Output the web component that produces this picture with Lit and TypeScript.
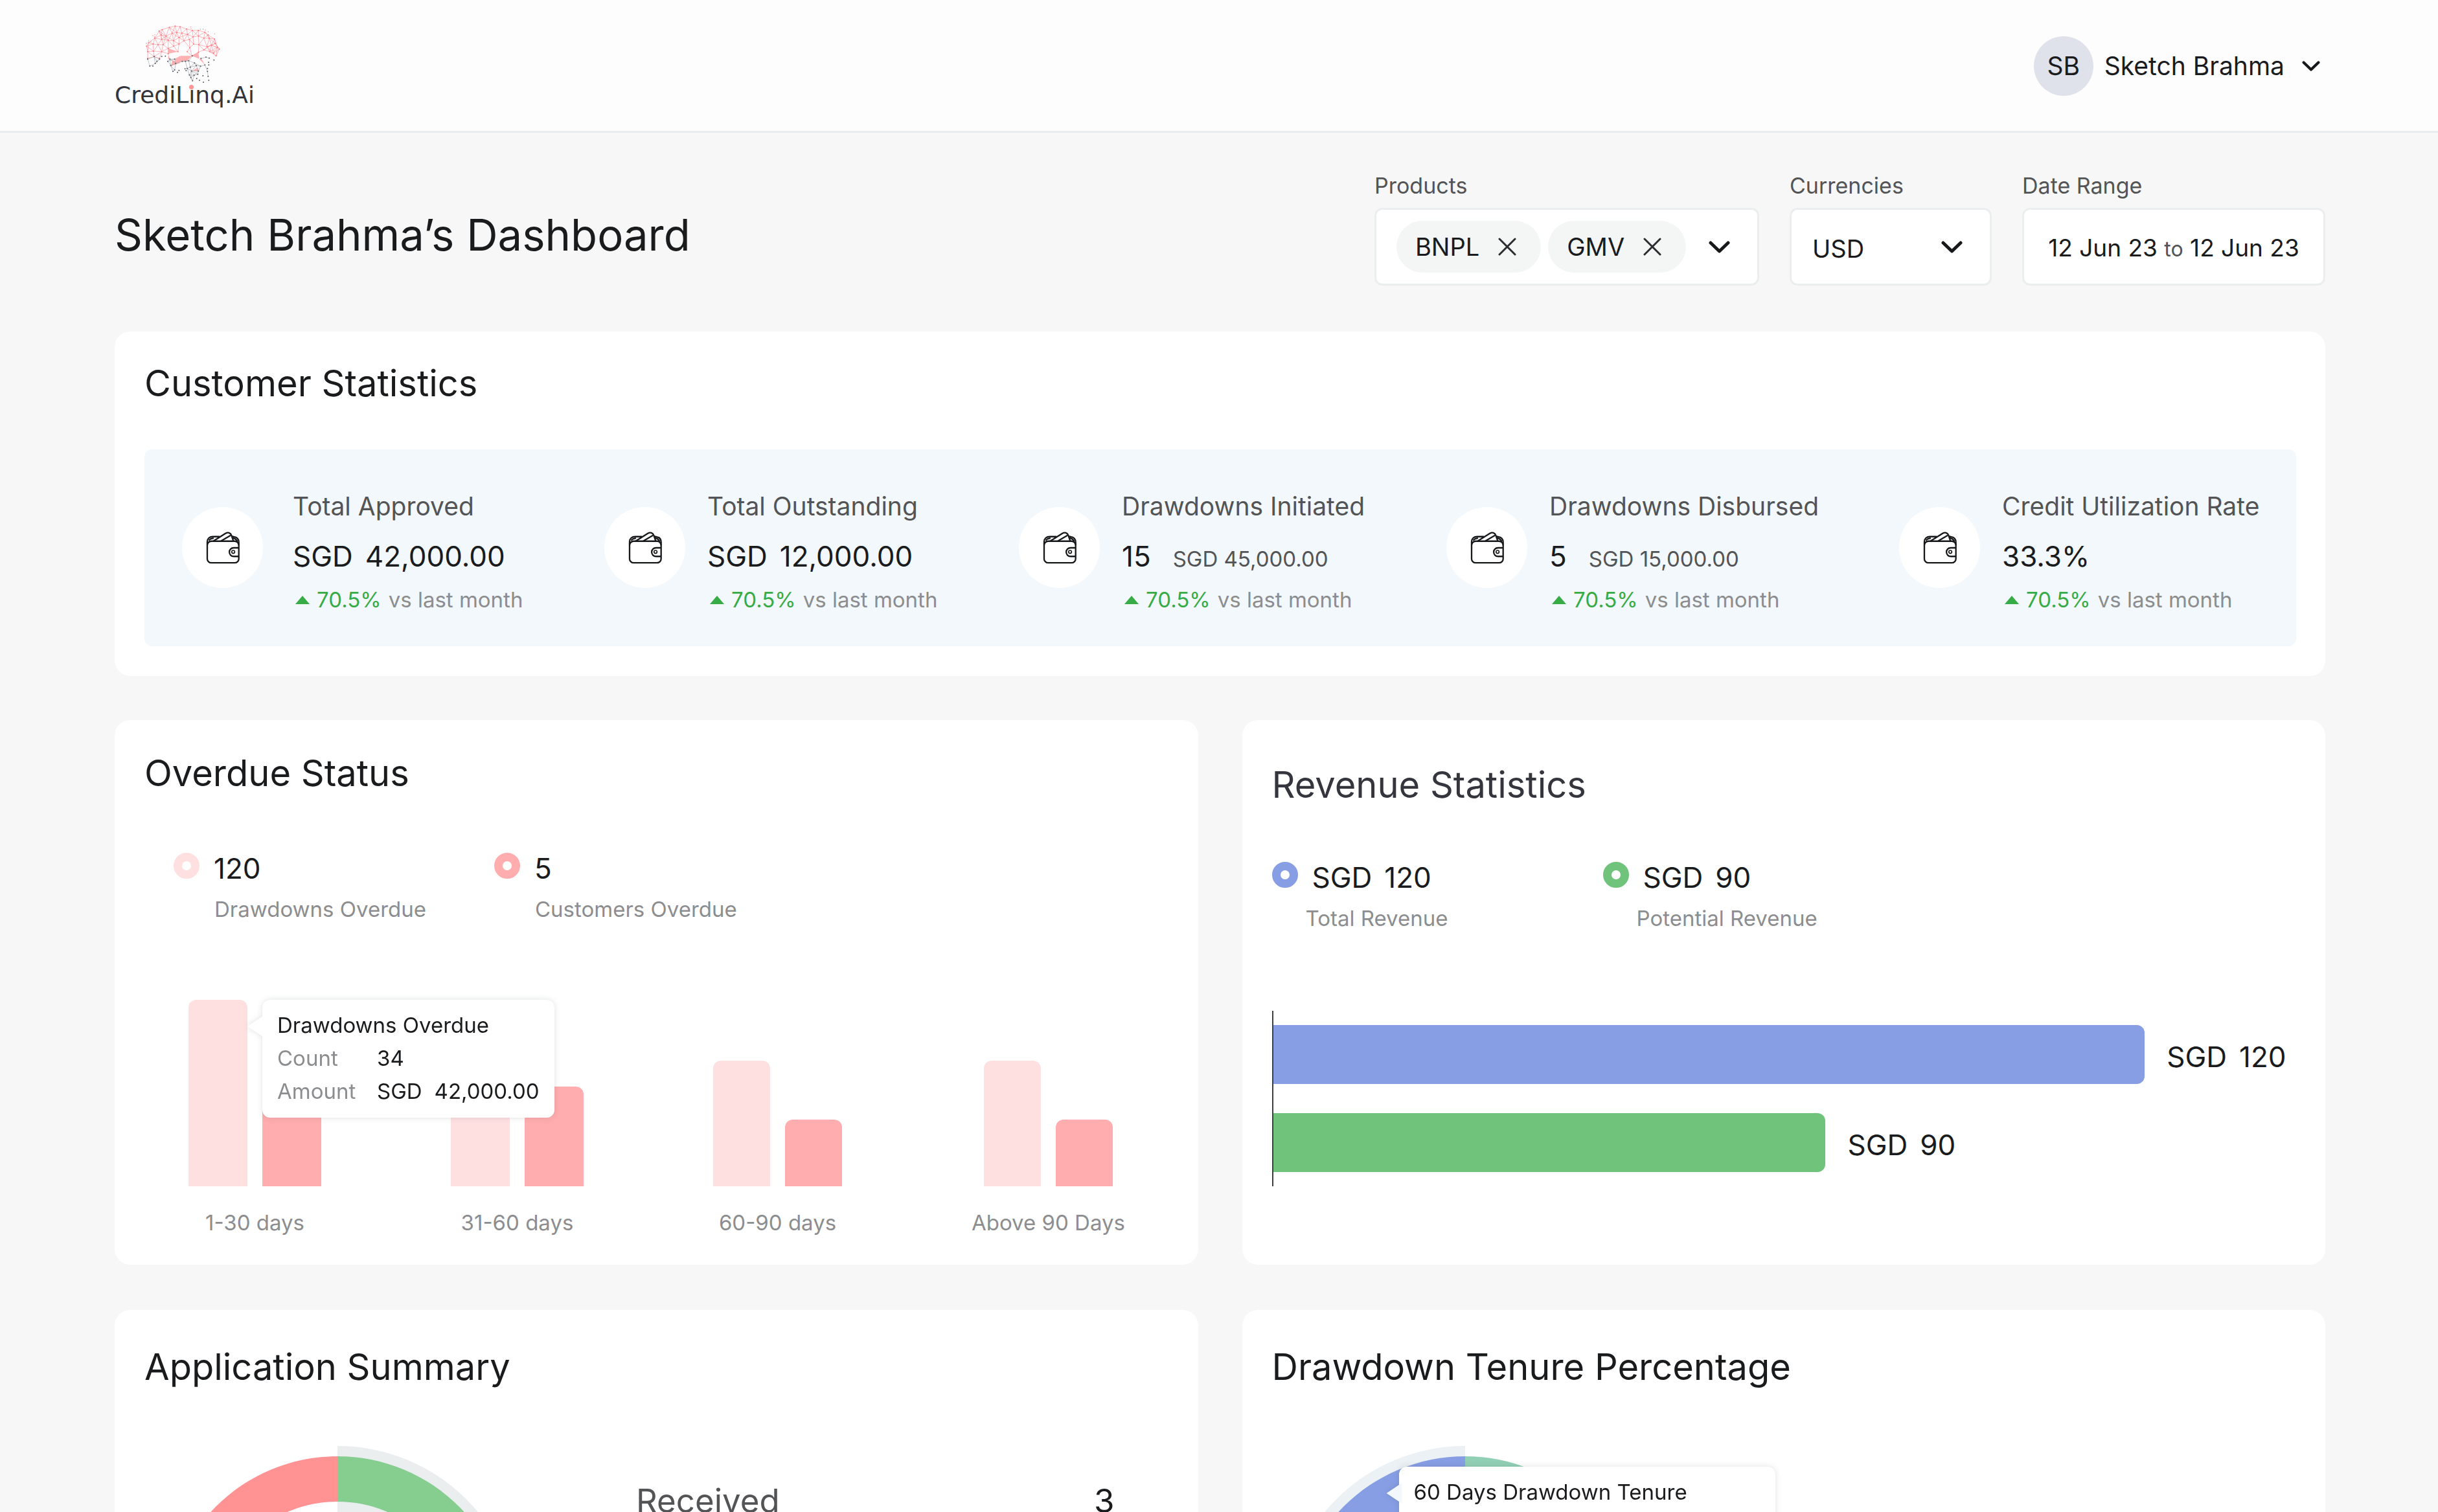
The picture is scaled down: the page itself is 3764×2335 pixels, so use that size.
import { LitElement, html, svg, css } from "lit";
import { customElement, state } from "lit/decorators.js";

type Point = [number, number];

/* ---------- Logo ---------- */

const CANOPY: Point[] = [
  [200, 155], [210, 138], [230, 145], [238, 118], [258, 85], [272, 78], [268, 103],
  [305, 68], [332, 62], [355, 65], [318, 95], [290, 108], [270, 123], [253, 148],
  [232, 178], [205, 180], [300, 128], [325, 130], [350, 115], [340, 92], [363, 95],
  [390, 100], [385, 75], [412, 82], [440, 82], [470, 90], [485, 103], [415, 112],
  [440, 108], [465, 118], [490, 118], [515, 122], [518, 142], [500, 150], [480, 158],
  [465, 172], [442, 148], [418, 145], [400, 162], [398, 124], [373, 130], [350, 145],
  [325, 155], [300, 165], [276, 148], [270, 180], [300, 190], [345, 180], [388, 180],
  [410, 200], [440, 183], [510, 188], [537, 168], [522, 200], [528, 160], [492, 180],
  [205, 212], [235, 203], [260, 212],
];

const ROOTS: Point[] = [
  [205, 215], [215, 247], [235, 203], [240, 235], [260, 215], [248, 225],
  [298, 225], [308, 215], [330, 215], [312, 245], [335, 235], [365, 225],
  [322, 272], [330, 265], [380, 225], [388, 258], [402, 252], [422, 233],
  [395, 222], [412, 200], [452, 212], [470, 242], [490, 210], [430, 245],
  [450, 248], [408, 270], [440, 270], [420, 290], [437, 285], [398, 288],
  [405, 300], [413, 315], [482, 272], [485, 295], [475, 206],
];

const SPECKS: Point[] = [
  [343, 276], [350, 267], [378, 260], [383, 268], [432, 305], [445, 313], [461, 292],
  [482, 258], [488, 313], [463, 322], [487, 230], [488, 242], [229, 247], [270, 203],
  [512, 219], [287, 201],
];

const SPARKS: Point[] = [
  [229, 106], [238, 102], [236, 112], [404, 66], [406, 74], [449, 76], [462, 76],
  [473, 80], [485, 88], [515, 98], [210, 130], [199, 142], [512, 176], [220, 134],
];

const FILLS = [
  "300,165 345,180 300,190", "300,190 300,215 308,215", "355,200 410,200 388,223 365,225",
  "440,183 410,200 443,213", "320,220 358,232 312,247", "443,213 470,242 455,214",
  "437,254 410,270 440,270", "330,215 355,200 365,225 340,235",
];

function mesh(points: Point[], reach: number) {
  const lines = [];
  for (let i = 0; i < points.length; i++) {
    for (let j = i + 1; j < points.length; j++) {
      const [a, b] = points[i];
      const [c, d] = points[j];
      if (Math.hypot(a - c, b - d) < reach) {
        lines.push(svg`<line x1=${a} y1=${b} x2=${c} y2=${d}></line>`);
      }
    }
  }
  return lines;
}

const dots = (points: Point[], r: number) =>
  points.map(([x, y]) => svg`<circle cx=${x} cy=${y} r=${r}></circle>`);

@customElement("brand-logo")
class BrandLogo extends LitElement {
  static styles = css`
    :host { display: block; color: #34353b; }
    .tree { display: block; width: 118px; height: 92px; margin-left: 46px; }
    .name { font: 36px/34px "DejaVu Sans", Verdana, sans-serif; white-space: nowrap; }
    .accent { position: relative; }
    .accent::before {
      content: ""; position: absolute; left: 50%; top: 5px;
      width: 7px; height: 7px; margin-left: -4px; border-radius: 50%; background: #ff9596;
    }
  `;
  render() {
    return html`
      <svg class="tree" viewBox="190 55 354 276" aria-hidden="true">
        <g fill="#ffb0b2">${FILLS.map((p) => svg`<polygon points=${p}></polygon>`)}</g>
        <g stroke="#ff9099" stroke-width="2">${mesh(CANOPY, 43)}</g>
        <g stroke="#a2a8ae" stroke-width="2">${mesh(ROOTS, 34)}</g>
        <g fill="#ff787e">${dots(CANOPY, 3)}${dots(SPARKS, 2)}</g>
        <g fill="#55585e">${dots(ROOTS, 3)}${dots(SPECKS, 3)}</g>
      </svg>
      <div class="name">CrediL<span class="accent">i</span>nq.Ai</div>
    `;
  }
}

/* ---------- Shared icons ---------- */

const chevron = (w: number, h: number) => html`
  <svg width=${w} height=${h} viewBox="0 0 33 19" fill="none" stroke="#17181a" stroke-width="5"
    stroke-linecap="round" stroke-linejoin="round" aria-hidden="true">
    <path d="M3 3 16.5 16 30 3"></path>
  </svg>`;

const cross = html`
  <svg width="28" height="28" viewBox="0 0 28 28" fill="none" stroke="#2b2c30" stroke-width="3"
    stroke-linecap="round" aria-hidden="true">
    <path d="M2 2 26 26M26 2 2 26"></path>
  </svg>`;

const wallet = html`
  <svg width="52" height="50" viewBox="142 153 157 150" fill="none" stroke="#17181a" stroke-width="7"
    stroke-linejoin="round" aria-hidden="true">
    <rect x="148" y="197" width="147" height="101" rx="19"></rect>
    <path d="M148 216v-16c0-15 11-24 26-24h32"></path>
    <path d="M156 194c4-9 12-9 22-11"></path>
    <path d="M295 216v-14c0-14-9-24-24-26l-10-1"></path>
    <path d="M176 197 233 161c11-7 24-3 28 9l9 27"></path>
    <path d="M212 196 257 170"></path>
    <path d="M268 182c9 2 16 6 20 16"></path>
    <path d="M295 228h-24a20 20 0 0 0 0 40h24"></path>
    <circle cx="269" cy="247" r="7" stroke-width="5"></circle>
  </svg>`;

const money = (amount: string) =>
  html`<span class="money"><span>SGD</span> <span>${amount}</span></span>`;

/* ---------- Data ---------- */

const STATS = [
  { label: "Total Approved", value: "42,000.00", currency: true },
  { label: "Total Outstanding", value: "12,000.00", currency: true },
  { label: "Drawdowns Initiated", value: "15", note: "SGD 45,000.00" },
  { label: "Drawdowns Disbursed", value: "5", note: "SGD 15,000.00" },
  { label: "Credit Utilization Rate", value: "33.3%" },
];

const OVERDUE = [
  { label: "1-30 days", drawdowns: 288, customers: 190, tip: true },
  { label: "31-60 days", drawdowns: 160, customers: 154 },
  { label: "60-90 days", drawdowns: 194, customers: 103, slim: true },
  { label: "Above 90 Days", drawdowns: 194, customers: 103, slim: true },
];

const REVENUE = [
  { label: "Total Revenue", amount: "120", tone: "blue", share: 85.2 },
  { label: "Potential Revenue", amount: "90", tone: "green", share: 54 },
];

@customElement("app-root")
class AppRoot extends LitElement {
  @state() private products = ["BNPL", "GMV"];

  static styles = css`
    :host {
      display: block; height: 100vh; overflow-y: auto; scrollbar-width: none;
      background: #f7f7f7; color: #1a1b1d;
      font-family: Inter, "Liberation Sans", sans-serif; font-size: 38px; line-height: 50px;
    }
    *, *::before, *::after { box-sizing: border-box; }
    h1, h2, p, dl, dd, dt { margin: 0; font-weight: 400; }
    button, select {
      font: inherit; color: inherit; background: none; border: 0; padding: 0; margin: 0; cursor: pointer;
    }
    svg { display: block; flex: none; }

    .header {
      display: flex; justify-content: space-between; align-items: center;
      padding: 38px 174px 38px 177px; background: #fdfdfd; border-bottom: 3px solid #e8ecee;
    }
    .user { display: flex; align-items: center; padding: 2px 8px 0 0; gap: 17px; font-size: 39px; }
    .avatar {
      width: 92px; height: 92px; border-radius: 50%; background: #dfe2ea;
      display: grid; place-items: center;
    }
    .user svg { margin-left: 10px; }

    .main { padding: 62px 174px 68px 177px; }
    .toolbar { display: flex; justify-content: space-between; align-items: center; margin-bottom: 71px; }
    .title { font-size: 67px; line-height: 80px; padding-top: 18px; }
    .filters { display: flex; gap: 47px; }
    .field { display: flex; flex-direction: column; gap: 14px; }
    .field-label { font-size: 34px; line-height: 40px; color: #535456; }
    .box {
      display: flex; align-items: center; height: 120px; background: #fff;
      border: 3px solid #ebeeef; border-radius: 12px; white-space: nowrap;
    }
    .products { width: 594px; gap: 11px; padding: 0 42px 0 31px; }
    .chip {
      display: flex; align-items: center; gap: 29px; height: 80px; padding: 0 38px 0 29px;
      border-radius: 40px; background: #f4f5f5;
    }
    .products .toggle { margin-left: auto; }
    .currency { position: relative; width: 312px; }
    .currency select {
      appearance: none; width: 100%; height: 100%; padding: 6px 32px 0; border-radius: 12px;
    }
    .currency svg { position: absolute; right: 42px; top: 48px; pointer-events: none; }
    .range { width: 468px; justify-content: center; padding-top: 6px; font-size: 37px; }
    .range .to { font-size: 32px; color: #535456; }

    .card { background: #fff; border-radius: 24px; padding: 48px 45px 46px 46px; }
    .card h2 { font-size: 56px; line-height: 64px; }
    .grid { display: grid; grid-template-columns: 1fr 1fr; gap: 70px 68px; margin-top: 68px; }
    .overdue { padding-top: 50px; padding-bottom: 44px; }
    .revenue { padding-top: 68px; }
    .revenue h2 { color: #34353d; }
    .share { padding-top: 56px; }

    .panel {
      display: grid; grid-template-columns: 652fr 640fr 660fr 699fr 553fr;
      margin-top: 70px; padding: 63px 60px 51px 58px; border-radius: 12px; background: #f3f8fc;
    }
    .stat { display: flex; align-items: flex-start; gap: 34px; min-width: 0; white-space: nowrap; }
    .stat:first-child { gap: 46px; }
    .disc {
      flex: none; width: 125px; height: 125px; margin-top: 26px; border-radius: 50%; background: #fff;
      display: grid; place-items: center;
    }
    .stat-label { font-size: 39px; color: #535456; }
    .stat-value {
      display: flex; align-items: baseline; gap: 34px; height: 64px; margin: 20px 0 14px;
      font-size: 44px; line-height: 64px;
    }
    .note { font-size: 33px; line-height: 40px; color: #535456; }
    .delta {
      display: flex; align-items: center; gap: 11px; padding-left: 4px;
      font-size: 33px; line-height: 42px; color: #8c8d8f;
    }
    .up { color: #36ab46; }
    .money { display: inline-flex; gap: 19px; white-space: nowrap; }

    .legend { display: flex; }
    .overdue .legend { margin-top: 87px; padding-left: 45px; }
    .revenue .legend { margin-top: 83px; }
    .overdue .key { width: 495px; }
    .revenue .key { width: 511px; }
    .key-value { display: flex; align-items: flex-start; gap: 22px; font-size: 44px; line-height: 56px; }
    .ring { width: 40px; height: 40px; margin-top: 4px; border: 13px solid; border-radius: 50%; background: #fff; }
    .key-label { margin-top: 14px; padding-left: 63px; font-size: 33px; line-height: 42px; color: #8c8d8f; }
    .revenue .key-label { padding-left: 52px; }
    .ring.light { border-color: #ffe0e1; }
    .ring.dark { border-color: #ffadaf; }
    .ring.blue { border-color: #879ee4; }
    .ring.green { border-color: #70c37b; }

    .columns { display: flex; gap: 200px; margin-top: 119px; padding-left: 68px; }
    .group { position: relative; display: flex; flex-direction: column; align-items: center; gap: 35px; }
    .bars { display: flex; align-items: flex-end; gap: 23px; height: 288px; }
    .bar { width: 91px; border-radius: 12px 12px 0 0; }
    .slim .bar { width: 88px; }
    .bar.light { background: #ffe0e1; }
    .bar.dark { background: #ffadaf; }
    .group-label { font-size: 33px; line-height: 42px; color: #8c8d8f; white-space: nowrap; }

    .tooltip {
      position: absolute; z-index: 1; left: 114px; top: 0; width: 451px; padding: 14px 23px 15px;
      border-radius: 12px; background: #fff; filter: drop-shadow(0 0 5px rgba(30, 40, 50, 0.14));
      font-size: 33px; line-height: 51px; white-space: nowrap;
    }
    .tooltip::before {
      content: ""; position: absolute; left: -23px; top: 25px; width: 24px; height: 32px;
      background: inherit; clip-path: polygon(0 50%, 100% 0, 100% 100%);
    }
    .tooltip dl { display: grid; grid-template-columns: 154px auto; }
    .tooltip dt { color: #8c8d8f; }

    .rows {
      display: flex; flex-direction: column; gap: 45px; margin-top: 122px; padding: 22px 0;
      border-left: 2px solid #3c3d40;
    }
    .row { display: flex; align-items: center; gap: 34px; height: 91px; font-size: 44px; }
    .row .money { padding-top: 6px; }
    .fill { height: 100%; border-radius: 0 12px 12px 0; }
    .fill.blue { background: #879ee4; }
    .fill.green { background: #70c37b; }

    .split { display: flex; align-items: flex-start; gap: 179px; margin-top: 90px; padding-left: 16px; }
    .pie { position: relative; }
    .pie .tooltip { left: 180px; top: 32px; width: 581px; min-height: 182px; }
    .pie .tooltip::before { left: -19px; background: #f3f8fc; }
    .totals { flex: 1; margin-top: 50px; padding-right: 84px; font-size: 51px; line-height: 70px; }
    .total { display: flex; justify-content: space-between; }
    .total dt { color: #535456; }
  `;

  private remove(name: string) {
    this.products = this.products.filter((p) => p !== name);
  }

  private key(tone: string, value: unknown, label: string) {
    return html`
      <div class="key">
        <div class="key-value"><span class="ring ${tone}"></span><span>${value}</span></div>
        <div class="key-label">${label}</div>
      </div>`;
  }

  private donut(left: string, right: string, halo: string, haloRight: boolean) {
    const sweep = haloRight ? 1 : 0;
    return html`
      <svg width="564" height="564" viewBox="-282 -282 564 564" aria-hidden="true">
        <path fill=${halo} d="M0-282A282 282 0 0 ${sweep} 0 282V178A178 178 0 0 ${1 - sweep} 0-178Z"></path>
        <path fill=${left} d="M0-266A266 266 0 0 0 0 266V196A196 196 0 0 1 0-196Z"></path>
        <path fill=${right} d="M0-266A266 266 0 0 1 0 266V196A196 196 0 0 0 0-196Z"></path>
      </svg>`;
  }

  render() {
    return html`
      <header class="header">
        <brand-logo></brand-logo>
        <button class="user" type="button">
          <span class="avatar">SB</span><span>Sketch Brahma</span>${chevron(28, 16)}
        </button>
      </header>

      <main class="main">
        <div class="toolbar">
          <h1 class="title">Sketch Brahma’s Dashboard</h1>
          <div class="filters">
            <div class="field" role="group" aria-labelledby="products-label">
              <span class="field-label" id="products-label">Products</span>
              <div class="box products">
                ${this.products.map(
                  (p) => html`
                    <span class="chip">${p}
                      <button type="button" aria-label="Remove ${p}" @click=${() => this.remove(p)}>${cross}</button>
                    </span>`
                )}
                <button class="toggle" type="button" aria-label="Choose products">${chevron(33, 19)}</button>
              </div>
            </div>
            <div class="field">
              <label class="field-label" for="currency">Currencies</label>
              <div class="box currency">
                <select id="currency"><option>USD</option></select>
                ${chevron(33, 19)}
              </div>
            </div>
            <div class="field">
              <label class="field-label" for="range">Date Range</label>
              <button class="box range" id="range" type="button">
                <span>12 Jun 23 <span class="to">to</span> 12 Jun 23</span>
              </button>
            </div>
          </div>
        </div>

        <section class="card">
          <h2>Customer Statistics</h2>
          <div class="panel">
            ${STATS.map(
              (s) => html`
                <div class="stat">
                  <span class="disc">${wallet}</span>
                  <div>
                    <div class="stat-label">${s.label}</div>
                    <div class="stat-value">
                      ${s.currency ? money(s.value) : html`<span>${s.value}</span>`}
                      ${s.note ? html`<span class="note">${s.note}</span>` : ""}
                    </div>
                    <div class="delta">
                      <svg width="22" height="13" viewBox="0 0 22 13" fill="#36ab46" aria-hidden="true">
                        <path d="M11 0 22 13H0Z"></path>
                      </svg>
                      <span class="up">70.5%</span><span>vs last month</span>
                    </div>
                  </div>
                </div>`
            )}
          </div>
        </section>

        <div class="grid">
          <section class="card overdue">
            <h2>Overdue Status</h2>
            <div class="legend">
              ${this.key("light", "120", "Drawdowns Overdue")}
              ${this.key("dark", "5", "Customers Overdue")}
            </div>
            <div class="columns">
              ${OVERDUE.map(
                (g) => html`
                  <div class="group ${g.slim ? "slim" : ""}">
                    <div class="bars">
                      <div class="bar light" style="height:${g.drawdowns}px"></div>
                      <div class="bar dark" style="height:${g.customers}px"></div>
                    </div>
                    <div class="group-label">${g.label}</div>
                    ${g.tip
                      ? html`
                          <div class="tooltip" role="tooltip">
                            <p>Drawdowns Overdue</p>
                            <dl>
                              <dt>Count</dt><dd>34</dd>
                              <dt>Amount</dt><dd>${money("42,000.00")}</dd>
                            </dl>
                          </div>`
                      : ""}
                  </div>`
              )}
            </div>
          </section>

          <section class="card revenue">
            <h2>Revenue Statistics</h2>
            <div class="legend">
              ${REVENUE.map((r) => this.key(r.tone, money(r.amount), r.label))}
            </div>
            <div class="rows">
              ${REVENUE.map(
                (r) => html`
                  <div class="row">
                    <div class="fill ${r.tone}" style="width:${r.share}%"></div>
                    ${money(r.amount)}
                  </div>`
              )}
            </div>
          </section>

          <section class="card share">
            <h2>Application Summary</h2>
            <div class="split">
              <div class="pie">${this.donut("#ff9293", "#86cd90", "#eaeeef", true)}</div>
              <dl class="totals">
                <div class="total"><dt>Received</dt><dd>3</dd></div>
              </dl>
            </div>
          </section>

          <section class="card share">
            <h2>Drawdown Tenure Percentage</h2>
            <div class="split">
              <div class="pie">
                ${this.donut("#879ee4", "#92d0b5", "#ebf1f5", false)}
                <div class="tooltip" role="tooltip"><p>60 Days Drawdown Tenure</p></div>
              </div>
            </div>
          </section>
        </div>
      </main>
    `;
  }
}
